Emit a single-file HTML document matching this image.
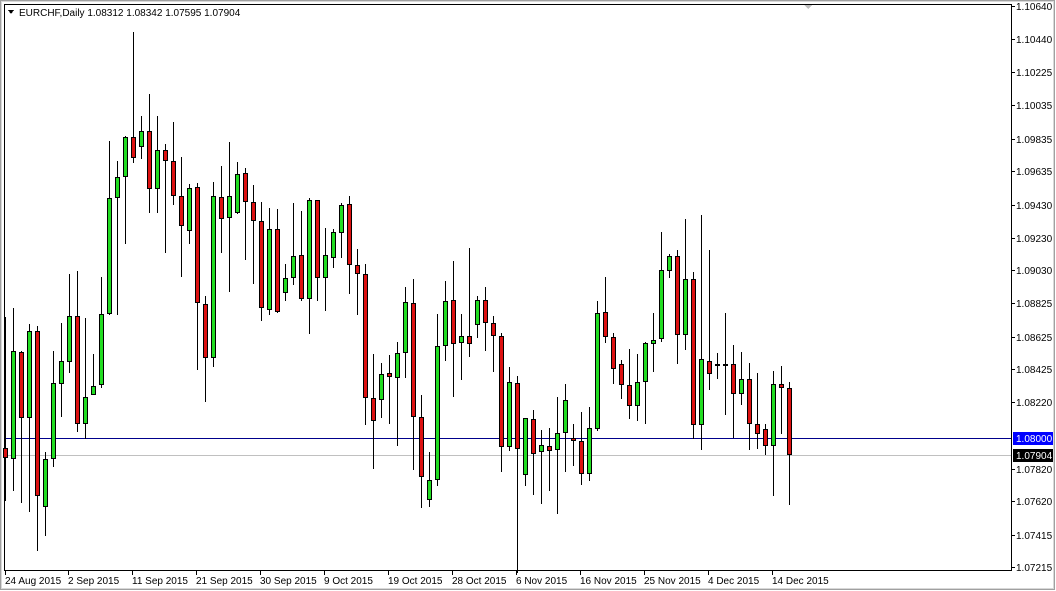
<!DOCTYPE html>
<html><head><meta charset="utf-8"><style>
html,body{margin:0;padding:0;width:1056px;height:591px;overflow:hidden;background:#fff;font-family:"Liberation Sans",sans-serif;}
svg text{font-family:"Liberation Sans",sans-serif;font-size:10px;fill:#000;}
</style></head><body>
<svg id="s" width="1056" height="591" xmlns="http://www.w3.org/2000/svg" shape-rendering="crispEdges">
<rect x="0" y="0" width="1056" height="591" fill="#fff"/>
<rect x="0.5" y="0.5" width="1054" height="589" fill="none" stroke="#a0a0a0"/>
<rect x="1.5" y="1.5" width="1052" height="587" fill="none" stroke="#d8d8d8"/>
<rect x="4.5" y="4.5" width="1007" height="566" fill="none" stroke="#000"/>
<line x1="5" y1="438.5" x2="1011" y2="438.5" stroke="#00008b"/>
<line x1="5" y1="455.5" x2="1011" y2="455.5" stroke="#c0c0c0"/>
<polygon points="804,5 812,5 808,9" fill="#c0c0c0"/>
<polygon points="8,10 14,10 11,14" fill="#000"/>
<text x="19" y="16">EURCHF,Daily  1.08312 1.08342 1.07595 1.07904</text>
<g id="c"></g>
<g id="ax"></g>
<rect x="1013" y="432" width="40" height="13" fill="#0000ff"/>
<text x="1016" y="442" style="fill:#fff">1.08000</text>
<rect x="1013" y="449" width="40" height="13" fill="#000"/>
<text x="1016" y="459" style="fill:#fff">1.07904</text>
</svg>
<script>
var d=[[308,487,435,445,0],[299,477,341,446,1],[341,489,342,406,0],[315,497,322,406,1],[317,535,322,482,0],[439,521,446,493,1],[341,454,372,446,1],[314,405,351,373,1],[266,363,307,352,1],[264,420,307,412,0],[309,427,386,412,1],[344,384,375,384,1],[269,377,305,374,1],[137,306,193,305,1],[157,306,172,193,1],[133,237,134,172,1],[32,159,134,154,0],[113,155,128,143,1],[92,207,128,184,0],[113,207,146,184,1],[140,246,146,157,0],[119,200,157,191,0],[153,269,191,220,0],[179,237,183,225,1],[178,360,182,295,0],
[288,391,296,348,0],[177,357,191,348,1],[162,246,192,213,0],[138,284,191,212,1],[158,208,169,207,1],[164,253,168,197,0],[180,276,197,215,0],[197,312,215,299,0],[202,306,223,301,1],[203,304,223,303,0],[257,293,270,285,1],[198,277,249,270,1],[205,293,248,291,0],[193,325,195,291,1],[195,293,195,270,0],[222,302,248,270,1],[223,261,226,251,1],[198,251,200,227,1],[191,286,199,258,0],[242,306,258,266,0],[257,413,266,387,0],[344,456,387,409,0],[353,406,364,389,1],[345,412,363,366,0],
[332,433,343,367,1],[279,367,294,343,1],[271,457,295,405,0],[384,494,405,463,0],[439,493,466,486,1],[305,472,336,466,1],[273,351,293,336,1],[254,386,292,334,0],[305,369,327,333,1],[241,347,327,334,0],[288,329,292,316,1],[279,341,292,314,0],[307,362,314,327,0],[324,459,327,434,0],[357,438,371,434,1],[365,557,372,436,0],[406,472,406,462,1],[398,481,407,441,0],[418,490,432,439,1],[416,477,433,438,0],[386,499,421,437,1],[373,459,389,421,1],[412,453,426,429,0],[400,471,429,461,0],[396,467,416,461,1],
[293,419,304,417,1],[269,333,303,328,0],[324,373,328,359,0],[350,388,354,374,0],[339,407,374,395,0],[344,409,371,395,1],[332,412,333,371,1],[304,362,331,334,1],[226,332,263,330,1],[247,270,249,264,1],[243,354,249,326,0],[213,340,271,326,1],[265,427,271,413,0],[209,437,349,413,1],[243,379,351,364,0],[343,368,354,355,2],[304,403,354,355,2],[335,426,354,383,0],[342,394,368,383,1],[353,437,368,412,0],[363,436,412,422,0],[412,442,417,433,0],[361,482,373,433,1],[356,422,373,377,0],[371,491,377,442,0]];
function T(y){return Math.round(20+(y-20)*1.0305);}
var h='';
d.forEach(function(c,i){var x=5+8*i;var a=T(c[0]),b=T(c[1]),t=T(c[2]),u=T(c[3]);
h+='<line x1="'+(x+0.5)+'" y1="'+a+'" x2="'+(x+0.5)+'" y2="'+b+'" stroke="#000"/>';
if(c[4]==2){h+='<rect x="'+(x-2)+'" y="'+t+'" width="5" height="2" fill="#000"/>';}
else{var hh=Math.max(u-t,2);h+='<rect x="'+(x-2+0.5)+'" y="'+(t+0.5)+'" width="4" height="'+(hh-1)+'" fill="'+(c[4]?'#22dd22':'#dd1111')+'" stroke="#000"/>';}
});
document.getElementById('c').innerHTML=h;
var p=[['1.10640',6],['1.10440',39],['1.10225',72],['1.10035',105],['1.09835',139],['1.09635',171],['1.09430',205],['1.09230',238],['1.09030',270],['1.08825',303],['1.08625',337],['1.08425',369],['1.08220',402],['1.07820',469],['1.07620',501],['1.07415',535],['1.07215',567]];
var a='';
p.forEach(function(q){a+='<line x1="1011" y1="'+(q[1]+0.5)+'" x2="1015" y2="'+(q[1]+0.5)+'" stroke="#000"/><text x="1016" y="'+(q[1]+4)+'">'+q[0]+'</text>';});
var dt=[['24 Aug 2015',4],['2 Sep 2015',67],['11 Sep 2015',131],['21 Sep 2015',195],['30 Sep 2015',259],['9 Oct 2015',323],['19 Oct 2015',387],['28 Oct 2015',451],['6 Nov 2015',515],['16 Nov 2015',579],['25 Nov 2015',643],['4 Dec 2015',707],['14 Dec 2015',771]];
dt.forEach(function(q){a+='<line x1="'+(q[1]+1.5)+'" y1="571" x2="'+(q[1]+1.5)+'" y2="575" stroke="#000"/><text x="'+(q[1]+1)+'" y="584">'+q[0]+'</text>';});
document.getElementById('ax').innerHTML=a;
</script>
</body></html>
